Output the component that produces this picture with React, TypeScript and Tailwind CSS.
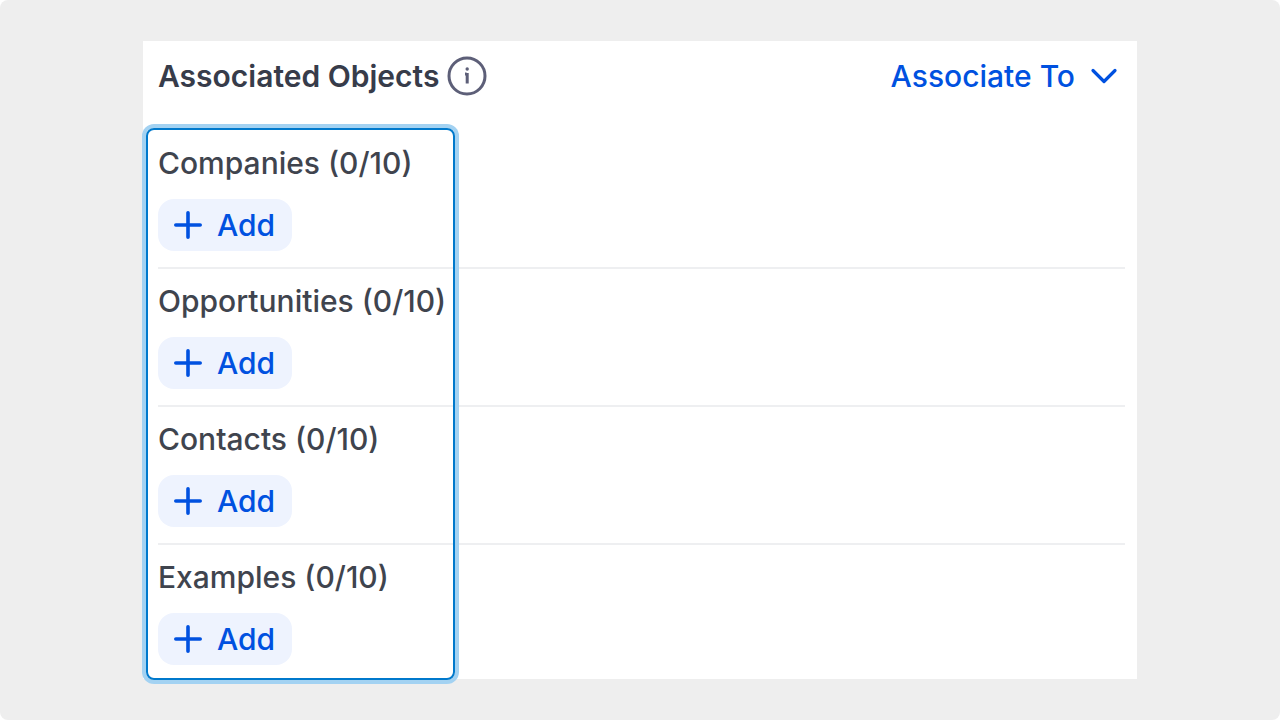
const objects = [
  { name: 'Companies', count: 0, limit: 10 },
  { name: 'Opportunities', count: 0, limit: 10 },
  { name: 'Contacts', count: 0, limit: 10 },
  { name: 'Examples', count: 0, limit: 10 },
];

function InfoIcon() {
  return (
    <svg viewBox="0 0 40 40" className="size-10 text-[#5d5f78]" fill="none" stroke="currentColor" aria-hidden="true">
      <circle cx="20" cy="20" r="18" strokeWidth="3" />
      <path d="M18 18h1.6M20.2 17v10.4" strokeWidth="3" />
      <circle cx="20.2" cy="13" r="1.7" fill="currentColor" stroke="none" />
    </svg>
  );
}

function ChevronIcon() {
  return (
    <svg viewBox="0 0 28 28" className="size-7" fill="none" stroke="currentColor" strokeWidth="3.2" aria-hidden="true">
      <path d="M3 8.5l11 11 11-11" strokeLinecap="round" strokeLinejoin="round" />
    </svg>
  );
}

function PlusIcon() {
  return (
    <svg viewBox="0 0 28 28" className="size-7" fill="none" stroke="currentColor" strokeWidth="3.6" aria-hidden="true">
      <path d="M14 1.8v24.4M1.8 14h24.4" strokeLinecap="round" />
    </svg>
  );
}

function AddButton({ label }: { label: string }) {
  return (
    <button
      type="button"
      aria-label={`Add ${label}`}
      className="flex h-[52px] w-[134px] items-center gap-[15px] rounded-2xl bg-[#eef3fe] pl-4 text-[30px] font-medium text-[#0051e0]"
    >
      <PlusIcon />
      Add
    </button>
  );
}

export default function App() {
  return (
    <div className="min-h-screen bg-white">
      <div className="min-h-screen rounded-lg bg-[#eeeeee] px-[143px] py-[41px] font-['Inter',sans-serif]">
        <section className="bg-white">
          <header className="flex h-[70px] items-center justify-between pr-[19px] pl-[15px]">
            <div className="flex items-center gap-2">
              <h1 className="text-[30px] font-semibold text-[#373c4a]">Associated Objects</h1>
              <InfoIcon />
            </div>
            <button type="button" className="flex items-center gap-[15px] text-[30px] font-medium text-[#0051e0]">
              Associate To
              <ChevronIcon />
            </button>
          </header>

          <div className="relative pt-5 pr-3 pl-[15px]">
            <ul className="divide-y-2 divide-[#eeeff1]">
              {objects.map((item) => (
                <li key={item.name} className="h-[138px] pt-3 last:h-[134px]">
                  <h2 className="mb-4 text-[30px] leading-[40px] font-medium text-[#3f444e]">
                    {item.name} ({item.count}/{item.limit})
                  </h2>
                  <AddButton label={item.name} />
                </li>
              ))}
            </ul>
            {/* highlight around the object list */}
            <div className="pointer-events-none absolute top-[17px] -bottom-px left-[3px] w-[309px] rounded-lg border-2 border-[#0079cc] ring-4 ring-[#a3d2f2]" />
          </div>
        </section>
      </div>
    </div>
  );
}
